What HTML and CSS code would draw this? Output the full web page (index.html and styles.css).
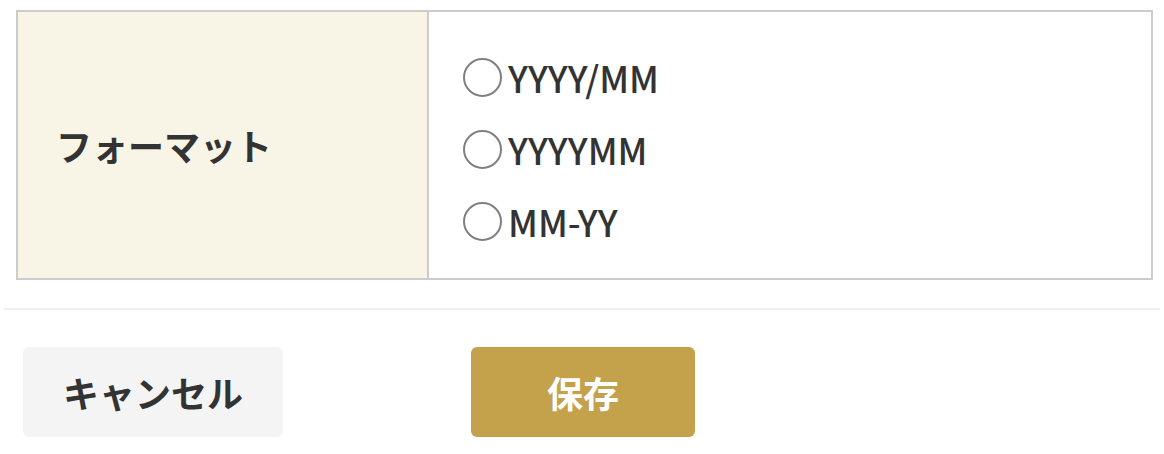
FILE: index.html
```html
<!DOCTYPE html>
<html>

<head>
  <title>フォーマット設定</title>
  <link rel="stylesheet" href="styles.css">
</head>

<body>
  <form class="format-form">
    <div class="form-table">
      <div class="label-cell">フォーマット</div>
      <div class="value-cell">
        <label class="radio-row"><input type="radio" name="format" value="YYYY/MM">YYYY/MM</label>
        <label class="radio-row"><input type="radio" name="format" value="YYYYMM">YYYYMM</label>
        <label class="radio-row"><input type="radio" name="format" value="MM-YY">MM-YY</label>
      </div>
    </div>

    <hr class="divider">

    <div class="actions">
      <button type="button" class="btn btn-cancel">キャンセル</button>
      <button type="submit" class="btn btn-save">保存</button>
    </div>
  </form>
</body>

</html>
```

FILE: styles.css
```css
* {
  box-sizing: border-box;
}

body {
  font-family: "Noto Sans CJK JP", "Noto Sans", sans-serif;
  margin: 0;
  color: #333;
  background-color: #fff;
}

.format-form {
  padding-top: 10px;
}

.form-table {
  display: grid;
  grid-template-columns: 409px 1fr;
  margin: 0 11px 0 16px;
  border: 2px solid #ccc;
}

.label-cell {
  display: flex;
  align-items: center;
  padding-left: 38px;
  background-color: #f8f4e6;
  font-size: 36px;
  font-weight: bold;
}

.value-cell {
  border-left: 2px solid #ccc;
  padding: 29px 0 21px 34px;
}

.radio-row {
  display: flex;
  align-items: center;
  gap: 6px;
  height: 72px;
  font-size: 36px;
  font-weight: 500;
  color: #333;
}

.radio-row input[type="radio"] {
  appearance: none;
  margin: 0;
  width: 39px;
  height: 39px;
  border: 2px solid #808080;
  border-radius: 50%;
  background-color: #fff;
}

.divider {
  margin: 28px 4px 0 4px;
  border: none;
  border-top: 2px solid #eee;
}

.actions {
  display: flex;
  padding: 37px 0 0 23px;
}

.btn {
  height: 90px;
  border: none;
  border-radius: 6px;
  font-family: inherit;
  font-size: 36px;
  font-weight: bold;
  cursor: pointer;
}

.btn-cancel {
  width: 260px;
  background-color: #f4f4f4;
  color: #333;
}

.btn-save {
  width: 224px;
  margin-left: 188px;
  background-color: #c4a24b;
  color: #fff;
}
```
